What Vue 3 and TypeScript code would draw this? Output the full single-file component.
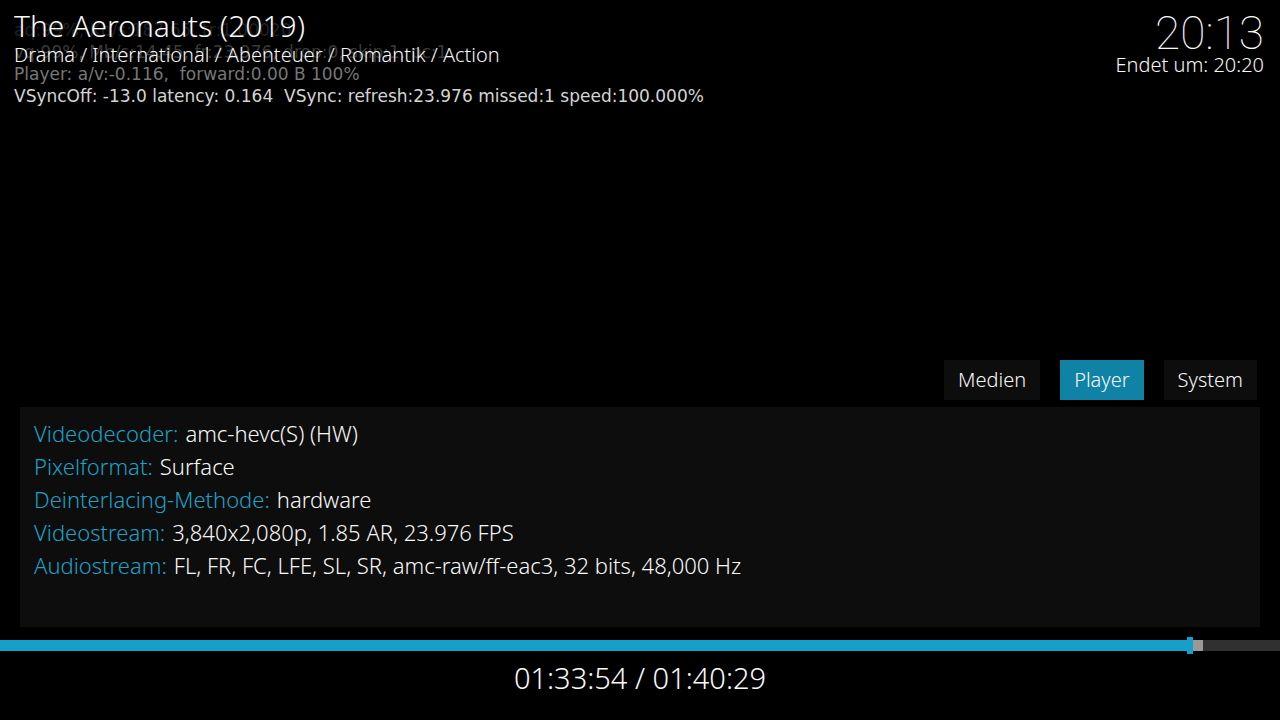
<script setup lang="ts">
import { ref } from 'vue'

interface InfoRow {
  label: string
  value: string
}

const debugLines: { text: string; tone: string }[] = [
  { text: 'aq:99%, Kb/s:187.65, tr:1.00020', tone: 'faint' },
  { text: 'vq:99%, Mb/s:14.45, fr:23.976, drop:0, skip:1, pc:1', tone: 'dim' },
  { text: 'Player: a/v:-0.116,  forward:0.00 B 100%', tone: 'medium' },
  { text: 'VSyncOff: -13.0 latency: 0.164  VSync: refresh:23.976 missed:1 speed:100.000%', tone: 'bright' },
]

const tabs: string[] = ['Medien', 'Player', 'System']
const activeTab = ref<string>('Player')

const rows: InfoRow[] = [
  { label: 'Videodecoder:', value: 'amc-hevc(S) (HW)' },
  { label: 'Pixelformat:', value: 'Surface' },
  { label: 'Deinterlacing-Methode:', value: 'hardware' },
  { label: 'Videostream:', value: '3,840x2,080p, 1.85 AR, 23.976 FPS' },
  { label: 'Audiostream:', value: 'FL, FR, FC, LFE, SL, SR, amc-raw/ff-eac3, 32 bits, 48,000 Hz' },
]

const played = 93
const buffered = 94
</script>

<template>
  <main class="screen">
    <div class="debug">
      <p v-for="line in debugLines" :key="line.text" :class="line.tone">{{ line.text }}</p>
    </div>

    <header class="top">
      <div>
        <h1>The Aeronauts (2019)</h1>
        <p class="genres">Drama / International / Abenteuer / Romantik / Action</p>
      </div>
      <div class="time">
        <div class="clock">20:13</div>
        <p class="ends">Endet um: 20:20</p>
      </div>
    </header>

    <section class="details">
      <nav class="tabs">
        <button
          v-for="tab in tabs"
          :key="tab"
          type="button"
          :class="{ active: tab === activeTab }"
          @click="activeTab = tab"
        >{{ tab }}</button>
      </nav>
      <dl class="panel">
        <div v-for="row in rows" :key="row.label" class="row">
          <dt>{{ row.label }}</dt>
          <dd>{{ row.value }}</dd>
        </div>
      </dl>
    </section>

    <footer>
      <div class="bar">
        <div class="buffer" :style="{ width: buffered + '%' }"></div>
        <div class="progress" :style="{ width: played + '%' }"></div>
        <div class="knob" :style="{ left: played + '%' }"></div>
      </div>
      <p class="position">01:33:54 / 01:40:29</p>
    </footer>
  </main>
</template>

<style>
body {
  background: #000;
}
</style>

<style scoped>
.screen {
  position: relative;
  display: flex;
  flex-direction: column;
  min-height: 100vh;
  background: #000;
  color: #f8f8f8;
  font-family: "Noto Sans", "Open Sans", sans-serif;
  font-weight: 300;
}

p,
h1,
dl,
dd {
  margin: 0;
}

.debug {
  position: absolute;
  top: 19px;
  left: 14px;
  font: 400 17px/22px "DejaVu Sans", sans-serif;
  white-space: pre;
}

.faint { color: #202020; }
.dim { color: #3a3a3a; }
.medium { color: #777; }
.bright { color: #d4d4d4; }

.top {
  position: relative;
  display: flex;
  justify-content: space-between;
  padding: 8px 16px 0 14px;
}

h1 {
  font-size: 30px;
  font-weight: 300;
  line-height: 36px;
}

.genres {
  font-size: 20px;
  line-height: 22px;
}

.time {
  text-align: right;
}

.clock {
  font: 100 46px/50px Roboto, sans-serif;
}

.ends {
  font-size: 20px;
  line-height: 14px;
}

.details {
  margin-top: auto;
  padding: 0 20px;
}

.tabs {
  display: flex;
  justify-content: flex-end;
  gap: 20px;
  padding: 0 3px 7px;
}

button {
  height: 40px;
  padding: 0 14px;
  border: 0;
  background: #0d0d0d;
  color: #f8f8f8;
  font: inherit;
  font-size: 20px;
  line-height: 24px;
}

.active {
  background: #1082a5;
}

.panel {
  min-height: 220px;
  padding: 10px 14px;
  box-sizing: border-box;
  background: #0d0d0d;
  font-size: 22px;
  line-height: 33px;
}

.row {
  display: flex;
  gap: 7px;
}

dt {
  color: #1fa0c4;
}

.bar {
  position: relative;
  height: 11px;
  margin-top: 13px;
  background: #303030;
}

.buffer,
.progress {
  position: absolute;
  top: 0;
  left: 0;
  height: 100%;
}

.buffer {
  background: #999;
}

.progress {
  background: #14a0c8;
}

.knob {
  position: absolute;
  top: -3px;
  width: 6px;
  height: 17px;
  margin-left: -3px;
  background: #14a0c8;
}

.position {
  padding: 7px 0 22px;
  font-size: 29px;
  line-height: 40px;
  text-align: center;
}
</style>
